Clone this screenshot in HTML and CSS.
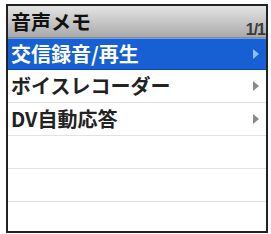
FILE: index.html
```html
<!DOCTYPE html>
<html lang="ja">
<head>
<meta charset="utf-8">
<link rel="stylesheet" href="styles.css">
</head>
<body>
<div class="screen">
  <div class="header">
    <span class="title">音声メモ</span>
    <span class="page">1/1</span>
  </div>
  <div class="row selected"><span class="label">交信録音/再生</span><span class="arrow"></span></div>
  <div class="row"><span class="label">ボイスレコーダー</span><span class="arrow"></span></div>
  <div class="row"><span class="label">DV自動応答</span><span class="arrow"></span></div>
  <div class="row"></div>
  <div class="row"></div>
  <div class="row last"></div>
</div>
</body>
</html>
```
FILE: styles.css
```css
html, body { margin: 0; padding: 0; background: #fff; }
body { padding: 4px 3px 0 6px; }
.screen {
  width: 258px;
  height: 225px;
  border: 2px solid #222;
  display: flex;
  flex-direction: column;
  font-family: "Noto Sans CJK JP", "Noto Sans", sans-serif;
  font-weight: 700;
  background: #fff;
  overflow: hidden;
}
.header {
  height: 31px;
  flex: none;
  display: flex;
  align-items: flex-end;
  justify-content: space-between;
  padding: 0 1px 0 3px;
  background: linear-gradient(#e4e4e4, #c4c4c4 55%, #a9a9a9);
  border-bottom: 1px solid #8a8a8a;
}
.title {
  font-size: 20px;
  line-height: 28px;
  color: #111;
  align-self: center;
}
.page {
  font-size: 16px;
  line-height: 15px;
  font-weight: 700;
  letter-spacing: -1px;
  color: #3a3a3a;
  font-family: "Liberation Sans", sans-serif;
  margin-bottom: 0;
}
.row {
  height: 32px;
  flex: none;
  display: flex;
  align-items: center;
  justify-content: space-between;
  padding: 0 7px 0 3px;
  border-bottom: 1px solid #e2e2e2;
  color: #222;
}
.row.last { border-bottom: none; flex: 1; }
.label { font-size: 20px; line-height: 28px; }
.arrow {
  width: 0; height: 0;
  border-top: 5px solid transparent;
  border-bottom: 5px solid transparent;
  border-left: 6px solid #8a8a8a;
}
.row.selected {
  background: #1660d4;
  color: #fff;
  border-top: 1px solid #6aa0f0;
  border-bottom: 1px solid #0f4aa8;
  height: 30px;
}
.row.selected .arrow { border-left-color: #8fc0ff; }
```
